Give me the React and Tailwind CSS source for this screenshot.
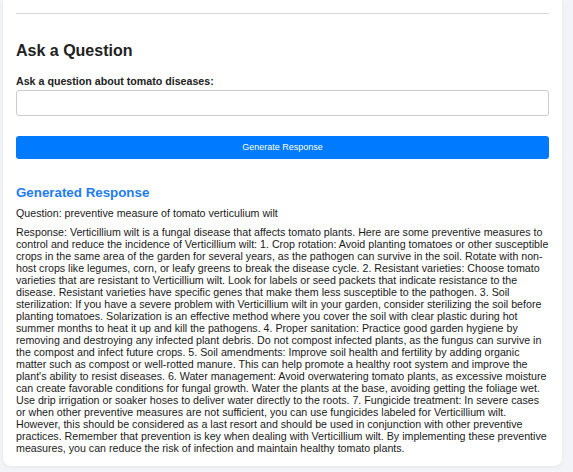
import { useState } from "react";

const question = "preventive measure of tomato verticulium wilt";

const response =
  "Verticillium wilt is a fungal disease that affects tomato plants. Here are some preventive measures to control and reduce the incidence of Verticillium wilt: 1. Crop rotation: Avoid planting tomatoes or other susceptible crops in the same area of the garden for several years, as the pathogen can survive in the soil. Rotate with non-host crops like legumes, corn, or leafy greens to break the disease cycle. 2. Resistant varieties: Choose tomato varieties that are resistant to Verticillium wilt. Look for labels or seed packets that indicate resistance to the disease. Resistant varieties have specific genes that make them less susceptible to the pathogen. 3. Soil sterilization: If you have a severe problem with Verticillium wilt in your garden, consider sterilizing the soil before planting tomatoes. Solarization is an effective method where you cover the soil with clear plastic during hot summer months to heat it up and kill the pathogens. 4. Proper sanitation: Practice good garden hygiene by removing and destroying any infected plant debris. Do not compost infected plants, as the fungus can survive in the compost and infect future crops. 5. Soil amendments: Improve soil health and fertility by adding organic matter such as compost or well-rotted manure. This can help promote a healthy root system and improve the plant's ability to resist diseases. 6. Water management: Avoid overwatering tomato plants, as excessive moisture can create favorable conditions for fungal growth. Water the plants at the base, avoiding getting the foliage wet. Use drip irrigation or soaker hoses to deliver water directly to the roots. 7. Fungicide treatment: In severe cases or when other preventive measures are not sufficient, you can use fungicides labeled for Verticillium wilt. However, this should be considered as a last resort and should be used in conjunction with other preventive practices. Remember that prevention is key when dealing with Verticillium wilt. By implementing these preventive measures, you can reduce the risk of infection and maintain healthy tomato plants.";

const AskQuestion = () => {
  const [text, setText] = useState("");

  return (
    <div className="bg-white rounded-b-lg shadow-[0_1px_4px_rgba(0,0,0,0.06)] px-[13px] pt-[13px] pb-[12px]">
      <hr className="border-t border-[#d5d5d8]" />

      <h2 className="text-[16px] font-bold text-[#222] mt-[27px] leading-[20px]">
        Ask a Question
      </h2>

      <label className="block text-[10.67px] font-bold text-[#222] mt-[13px] leading-[14px]">
        Ask a question about tomato diseases:
      </label>
      <input
        value={text}
        onChange={(e) => setText(e.target.value)}
        className="block w-full h-[26px] mt-[2px] border border-[#ccc] rounded-[3px] px-2 text-[11px] outline-none"
      />

      <button className="block w-full h-[23px] mt-[20px] bg-[#007bff] rounded-[3px] text-white text-[9px] cursor-pointer">
        Generate Response
      </button>

      <h3 className="text-[13.33px] font-bold text-[#1e7cf2] mt-[26px] leading-[16px]">
        Generated Response
      </h3>
      <p className="text-[10.67px] leading-[12px] text-[#1a1a1a] mt-[6px]">
        Question: {question}
      </p>
      <p className="text-[10.67px] leading-[12px] text-[#1a1a1a] mt-[7px]">
        Response: {response}
      </p>
    </div>
  );
};

export default function App() {
  return (
    <div className="min-h-[472px] bg-[#f3f4f7] pl-[3px] pr-[11px] font-['Liberation_Sans',Arial,sans-serif]">
      <AskQuestion />
    </div>
  );
}
